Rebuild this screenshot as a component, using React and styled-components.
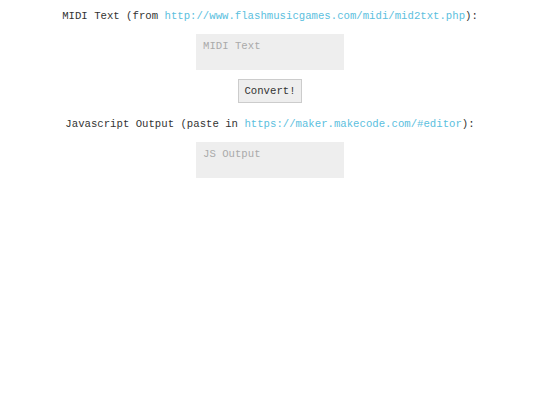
import styled, { createGlobalStyle } from 'styled-components';

const GlobalStyle = createGlobalStyle`
    body {
        margin: 0;
        background: #fff;
        font-family: "Liberation Mono", "Courier New", monospace;
        font-size: 10.67px;
        color: #333;
    }
`;

const Page = styled.div`
    display: flex;
    flex-direction: column;
    align-items: center;
    padding-top: 10px;
`;

const Label = styled.div`
    line-height: 13px;
    white-space: nowrap;
    margin-top: ${(p) => p.$mt || '0px'};
`;

const Link = styled.a`
    color: #5bc0de;
    text-decoration: none;
`;

const TextBox = styled.textarea`
    box-sizing: border-box;
    width: 148px;
    height: 36px;
    margin-top: ${(p) => p.$mt || '0px'};
    padding: 6px 7px;
    border: none;
    outline: none;
    resize: none;
    background: #eee;
    font-family: inherit;
    font-size: inherit;
    line-height: 12px;
    color: #333;

    &::placeholder {
        color: #aaa;
    }
`;

const Button = styled.button`
    box-sizing: border-box;
    width: 64px;
    height: 24px;
    margin-top: 9px;
    padding: 0;
    border: 1px solid #ccc;
    background: #eee;
    font-family: inherit;
    font-size: inherit;
    color: #333;
    cursor: pointer;
`;

export default function App() {
    return (
        <>
            <GlobalStyle />
            <Page>
                <Label>
                    MIDI Text (from <Link href="#">http://www.flashmusicgames.com/midi/mid2txt.php</Link>):
                </Label>
                <TextBox $mt="11px" placeholder="MIDI Text" />
                <Button>Convert!</Button>
                <Label $mt="15px">
                    Javascript Output (paste in <Link href="#">https://maker.makecode.com/#editor</Link>):
                </Label>
                <TextBox $mt="11px" placeholder="JS Output" />
            </Page>
        </>
    );
}
